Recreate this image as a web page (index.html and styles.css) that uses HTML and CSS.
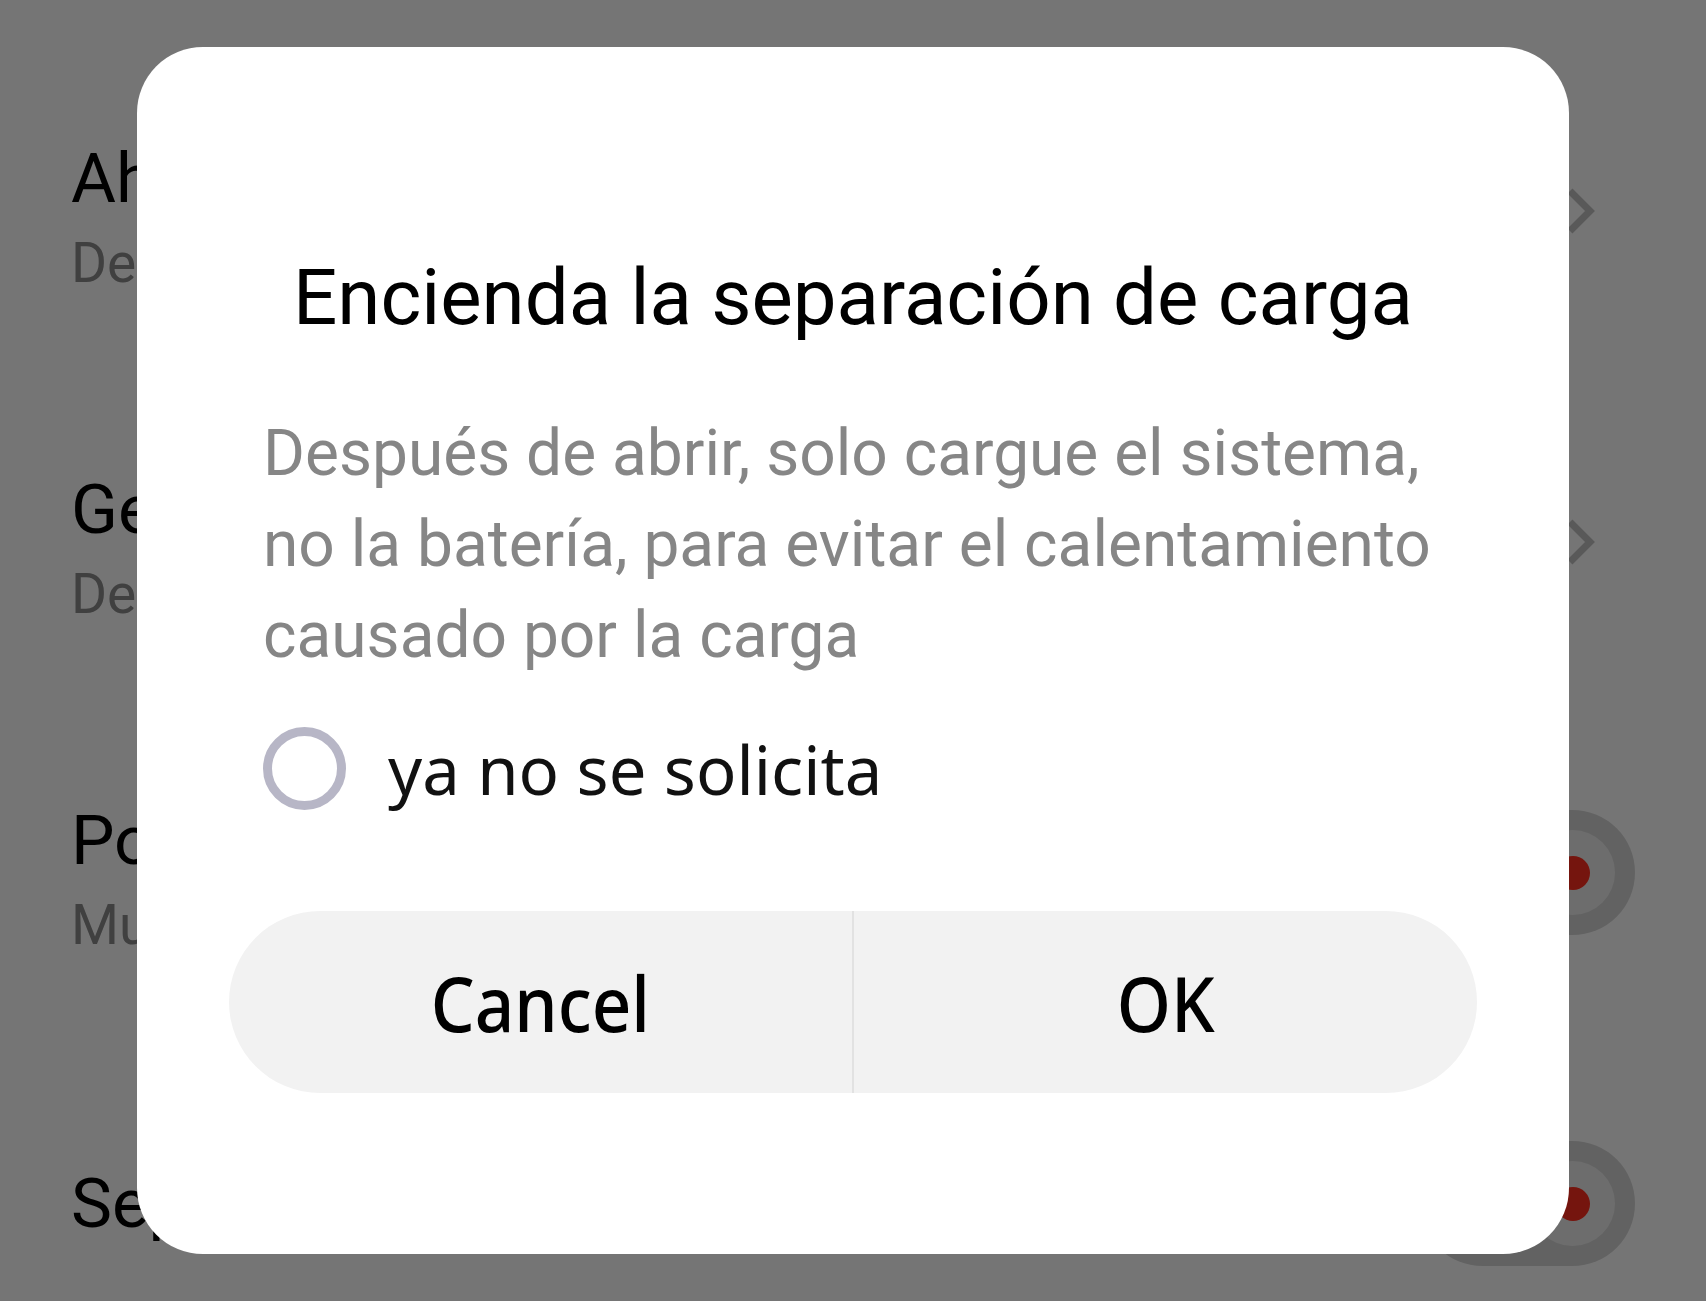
FILE: index.html
```html
<!DOCTYPE html>
<html lang="es">
<head>
    <meta charset="UTF-8">
    <meta name="viewport" content="width=device-width, initial-scale=1.0">
    <title>Separación de carga</title>
    <link rel="stylesheet" href="styles.css">
</head>
<body>
    <div class="settings">
        <div class="row">
            <div class="row-text">
                <div class="row-title">Ahorro de batería</div>
                <div class="row-sub">Desactivado</div>
            </div>
            <svg class="chevron" viewBox="0 0 32 48"><path d="M6 4 L26 24 L6 44" /></svg>
        </div>
        <div class="row">
            <div class="row-text">
                <div class="row-title">Gestión de batería</div>
                <div class="row-sub">Desactivado</div>
            </div>
            <svg class="chevron" viewBox="0 0 32 48"><path d="M6 4 L26 24 L6 44" /></svg>
        </div>
        <div class="row">
            <div class="row-text">
                <div class="row-title">Porcentaje de batería</div>
                <div class="row-sub">Muestra el porcentaje</div>
            </div>
            <div class="toggle"><div class="knob"><span class="dot"></span></div></div>
        </div>
        <div class="row">
            <div class="row-text single">
                <div class="row-title">Separación de carga</div>
            </div>
            <div class="toggle"><div class="knob"><span class="dot"></span></div></div>
        </div>
    </div>

    <div class="scrim">
        <div class="dialog">
            <h1 class="dialog-title">Encienda la separación de carga</h1>
            <p class="dialog-body">Después de abrir, solo cargue el sistema, no la batería, para evitar el calentamiento causado por la carga</p>
            <label class="check-row">
                <span class="check-circle"></span>
                <span class="check-label">ya no se solicita</span>
            </label>
            <div class="actions">
                <button class="action"><span>Cancel</span></button>
                <button class="action"><span>OK</span></button>
            </div>
        </div>
    </div>
</body>
</html>
```

FILE: styles.css
```css
html, body { height: 100%; }
body { margin: 0; padding: 0; background-color: #fff; font-family: Roboto, "Noto Sans", sans-serif; overflow: hidden; }

/* settings page behind the dialog */
.settings { height: 100%; overflow: hidden; padding: 45px 71px 0 71px; box-sizing: border-box; }
.row { min-height: 331px; display: flex; align-items: center; justify-content: space-between; }
.row-text { padding-top: 12px; }
.row-text.single { padding-top: 0; }
.row-title { font-size: 69px; line-height: 83px; color: #000; }
.row-sub { font-size: 55px; line-height: 66px; color: #8c8c8c; margin-top: 10px; }
.chevron { width: 32px; height: 48px; margin-right: 39px; fill: none; stroke: #c2c2c2; stroke-width: 7; }
.toggle { width: 215px; height: 125px; border-radius: 63px; background-color: #d6d6d6; display: flex; align-items: center; justify-content: flex-end; padding-right: 20px; box-sizing: border-box; }
.knob { width: 85px; height: 85px; border-radius: 50%; background-color: #eeeeee; display: flex; align-items: center; justify-content: center; }
.dot { width: 34px; height: 34px; border-radius: 50%; background-color: #ff2f1f; }

/* dialog */
.scrim { position: fixed; inset: 0; background-color: rgba(0, 0, 0, 0.54); display: flex; align-items: center; justify-content: center; }
.dialog { width: 1432px; box-sizing: border-box; background-color: #fff; border-radius: 66px; padding: 203px 112px 161px 126px; }
.dialog-title { margin: 0 0 0 -14px; font-size: 78px; line-height: 96px; font-weight: 400; color: #000; text-align: center; white-space: nowrap; }
.dialog-body { margin: 62px 0 0 0; font-size: 64px; line-height: 91px; color: #868686; }
.check-row { display: flex; align-items: center; margin-top: 46px; height: 83px; }
.check-circle { width: 83px; height: 83px; box-sizing: border-box; border: 9px solid #b7b6c6; border-radius: 50%; flex-shrink: 0; }
.check-label { margin-left: 42px; font-family: "Noto Sans", sans-serif; font-size: 67px; color: #111; }
.actions { display: flex; margin: 101px -20px 0 -34px; height: 182px; border-radius: 91px; background-color: #f2f2f2; overflow: hidden; }
.action { flex: 1; border: none; background: none; font-family: "Noto Sans", sans-serif; font-size: 76px; font-weight: 500; color: #000; padding: 0; }
.action span { display: inline-block; transform: scaleX(0.91); }
.action + .action { border-left: 2px solid #e2e2e2; }
```
